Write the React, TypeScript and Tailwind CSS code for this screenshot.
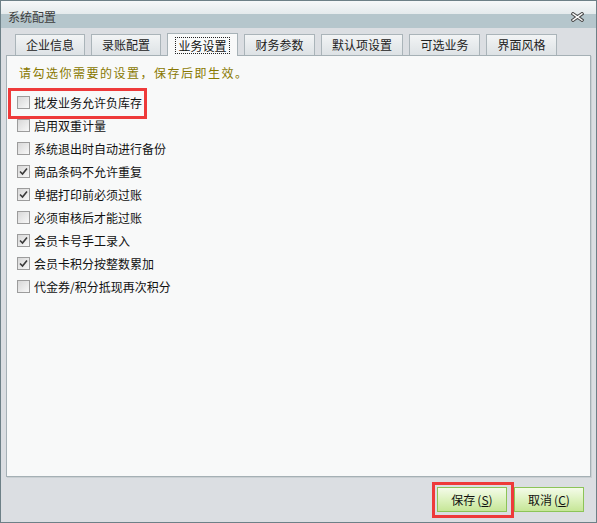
import React from "react";

const tabs: { label: string; w: string; active?: boolean }[] = [
  { label: "企业信息", w: "w-[70px]" },
  { label: "录账配置", w: "w-[70px]" },
  { label: "业务设置", w: "w-[71px]", active: true },
  { label: "财务参数", w: "w-[71px]" },
  { label: "默认项设置", w: "w-[82px]" },
  { label: "可选业务", w: "w-[71px]" },
  { label: "界面风格", w: "w-[71px]" },
];

const items: { label: string; checked: boolean }[] = [
  { label: "批发业务允许负库存", checked: false },
  { label: "启用双重计量", checked: false },
  { label: "系统退出时自动进行备份", checked: false },
  { label: "商品条码不允许重复", checked: true },
  { label: "单据打印前必须过账", checked: true },
  { label: "必须审核后才能过账", checked: false },
  { label: "会员卡号手工录入", checked: true },
  { label: "会员卡积分按整数累加", checked: true },
  { label: "代金券/积分抵现再次积分", checked: false },
];

function CheckBox({ checked }: { checked: boolean }) {
  return (
    <div className="w-[13px] h-[13px] border border-[#9c9c9c] bg-gradient-to-br from-[#d8d8d8] to-[#f8f8f8] flex items-center justify-center shrink-0">
      {checked && (
        <svg width="9" height="9" viewBox="0 0 9 9">
          <path d="M1 4.5 L3.5 7 L8 1.5" stroke="#3a3a3a" strokeWidth="1.6" fill="none" />
        </svg>
      )}
    </div>
  );
}

function Btn({ label, k }: { label: string; k: string }) {
  return (
    <div className="w-[70px] h-[25px] border border-[#8cc458] bg-gradient-to-b from-[#f4fbe9] via-[#ddf2bf] to-[#c6e697] flex items-center justify-center text-[12px] text-[#111]">
      <span>
        {label}
        <span className="ml-[2px]">(</span>
        <span className="underline">{k}</span>
        <span>)</span>
      </span>
    </div>
  );
}

export default function App() {
  return (
    <div
      className="relative w-[597px] h-[523px] flex flex-col bg-[#dbdee2] border border-[#6d8087] overflow-hidden"
      style={{ fontFamily: '"Noto Sans CJK SC", "Noto Sans", sans-serif' }}
    >
      {/* title bar */}
      <div className="h-[27px] shrink-0 flex flex-col relative">
        <div className="h-[13px] bg-gradient-to-b from-[#f6f8f9] to-[#e4eaec]" />
        <div className="flex-1 bg-[#b5c6cc]" />
        <div className="absolute inset-0 flex items-center justify-between pl-[7px] pr-[12px] pt-[4px]">
          <span className="text-[12px] text-[#3d3d3d]">系统配置</span>
          <svg width="13" height="10" viewBox="0 0 13 10">
            <path d="M2 1.8 L11 8.2 M11 1.8 L2 8.2" stroke="#4a4a4a" strokeWidth="3.4" strokeLinecap="square" />
            <path d="M2 1.8 L11 8.2 M11 1.8 L2 8.2" stroke="#ffffff" strokeWidth="1.4" strokeLinecap="square" />
          </svg>
        </div>
      </div>

      {/* tabs */}
      <div className="h-[27px] shrink-0 flex items-end gap-[6px] pl-[14px] relative z-10">
        {tabs.map((t) =>
          t.active ? (
            <div
              key={t.label}
              className={`${t.w} h-[23px] bg-[#f8f9f9] border border-b-0 border-[#a7b2b7] flex items-center justify-center -mb-[1px]`}
            >
              <span className="text-[12px] text-[#111] leading-[15px] px-[2px] outline outline-1 outline-dotted outline-[#222]">
                {t.label}
              </span>
            </div>
          ) : (
            <div
              key={t.label}
              className={`${t.w} h-[21px] bg-gradient-to-b from-[#f2f4f5] to-[#dde2e5] border border-b-0 border-[#aab4b9] flex items-center justify-center text-[12px] text-[#222]`}
            >
              {t.label}
            </div>
          )
        )}
      </div>

      {/* panel */}
      <div className="mx-[5px] h-[422px] shrink-0 bg-[#f8f9f9] border border-[#a5b0b5] shadow-[1px_1px_0_#c9cfd2] flex flex-col">
        <div className="mt-[8px] pl-[12px] h-[18px] flex items-center text-[12px] text-[#887800] tracking-[1.5px]">
          请勾选你需要的设置，保存后即生效。
        </div>
        <div className="mt-[9px] flex flex-col">
          {items.map((it) => (
            <div key={it.label} className="h-[23px] flex items-center gap-[4px] pl-[10px] text-[12px] text-[#111]">
              <CheckBox checked={it.checked} />
              <span>{it.label}</span>
            </div>
          ))}
        </div>
      </div>

      {/* buttons */}
      <div className="flex-1 flex items-start justify-end gap-[7px] pr-[12px] pt-[10px]">
        <Btn label="保存" k="S" />
        <Btn label="取消" k="C" />
      </div>

      {/* red annotation boxes */}
      <div className="absolute left-[7px] top-[87px] w-[139px] h-[31px] border-[3px] border-[#ee3a3a]" />
      <div className="absolute left-[431px] top-[481px] w-[82px] h-[36px] border-[3px] border-[#ee3a3a]" />
    </div>
  );
}
